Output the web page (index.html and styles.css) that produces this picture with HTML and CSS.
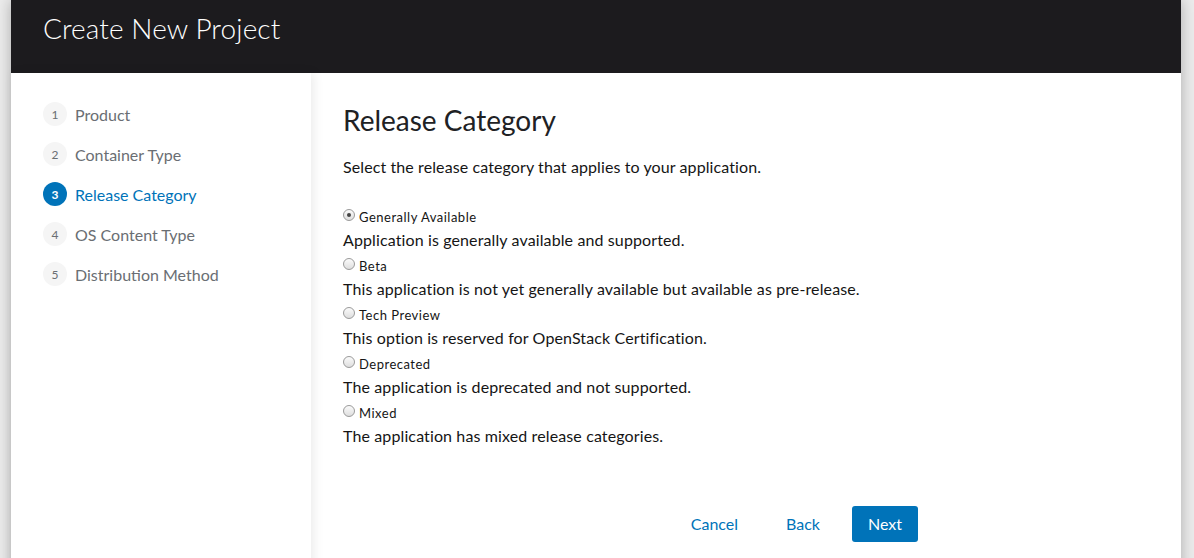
FILE: index.html
```html
<!DOCTYPE html>
<html lang="en">
<head>
<meta charset="utf-8">
<title>Create New Project</title>
<link rel="stylesheet" href="styles.css">
</head>
<body>
<div class="modal">
  <header class="modal-header">
    <h1 class="modal-title">Create New Project</h1>
  </header>
  <div class="wizard">
    <nav class="wizard-nav">
      <ol class="steps">
        <li class="step"><span class="step-num">1</span><span class="step-label">Product</span></li>
        <li class="step"><span class="step-num">2</span><span class="step-label">Container Type</span></li>
        <li class="step step-active"><span class="step-num">3</span><span class="step-label">Release Category</span></li>
        <li class="step"><span class="step-num">4</span><span class="step-label">OS Content Type</span></li>
        <li class="step"><span class="step-num">5</span><span class="step-label">Distribution Method</span></li>
      </ol>
    </nav>
    <main class="wizard-main">
      <h2 class="section-title">Release Category</h2>
      <p class="intro">Select the release category that applies to your application.</p>
      <div class="options">
        <div class="option">
          <label class="option-label"><input type="radio" name="cat" class="radio" checked> Generally Available</label>
          <p class="option-desc">Application is generally available and supported.</p>
        </div>
        <div class="option">
          <label class="option-label"><input type="radio" name="cat" class="radio"> Beta</label>
          <p class="option-desc">This application is not yet generally available but available as pre-release.</p>
        </div>
        <div class="option">
          <label class="option-label"><input type="radio" name="cat" class="radio"> Tech Preview</label>
          <p class="option-desc">This option is reserved for OpenStack Certification.</p>
        </div>
        <div class="option">
          <label class="option-label"><input type="radio" name="cat" class="radio"> Deprecated</label>
          <p class="option-desc">The application is deprecated and not supported.</p>
        </div>
        <div class="option">
          <label class="option-label"><input type="radio" name="cat" class="radio"> Mixed</label>
          <p class="option-desc">The application has mixed release categories.</p>
        </div>
      </div>
      <div class="footer">
        <button class="btn btn-link">Cancel</button>
        <button class="btn btn-link">Back</button>
        <button class="btn btn-primary">Next</button>
      </div>
    </main>
  </div>
</div>
</body>
</html>
```

FILE: styles.css
```css
* { box-sizing: border-box; }
html, body { height: 100%; }
body {
  margin: 0;
  background: #ececec;
  font-family: Lato, "Liberation Sans", sans-serif;
  color: #151515;
  overflow: hidden;
}
.modal {
  margin: 0 13px 0 11px;
  min-height: 700px;
  background: #fff;
  box-shadow: 0 0 14px rgba(0,0,0,0.28);
  display: flex;
  flex-direction: column;
}
.modal-header {
  height: 73px;
  background: #1c1b1e;
  padding: 10px 32px 0;
}
.modal-title {
  margin: 0;
  font-size: 28px;
  line-height: 36px;
  font-weight: 300;
  color: #fff;
  letter-spacing: 0.1px;
}
.wizard {
  flex: 1;
  display: grid;
  grid-template-columns: 300px 1fr;
}
.wizard-nav {
  position: relative;
  z-index: 1;
  background: #fff;
  box-shadow: 3px 0 10px rgba(0,0,0,0.08);
  padding: 29px 16px 0 32px;
}
.steps {
  list-style: none;
  margin: 0;
  padding: 0;
  display: flex;
  flex-direction: column;
  gap: 16px;
}
.step {
  display: flex;
  align-items: center;
  gap: 8px;
  height: 24px;
}
.step-num {
  width: 24px;
  height: 24px;
  border-radius: 50%;
  background: #f5f5f5;
  color: #6a6e73;
  font-size: 12px;
  display: flex;
  align-items: center;
  justify-content: center;
}
.step-label {
  font-size: 16px;
  color: #6a6e73;
}
.step-active .step-num {
  background: #0073b9;
  color: #fff;
  font-weight: 700;
}
.step-active .step-label { color: #0073b9; }
.wizard-main {
  padding: 29px 32px 0;
  background: #fff;
}
.section-title {
  margin: 0;
  font-size: 28px;
  line-height: 36px;
  font-weight: 400;
  color: #202124;
}
.intro {
  margin: 17px 0 0;
  font-size: 16px;
  line-height: 24px;
  letter-spacing: 0.1px;
}
.options {
  margin-top: 27px;
  display: flex;
  flex-direction: column;
}
.option-label {
  display: flex;
  align-items: center;
  font-size: 13px;
  line-height: 22px;
  color: #151515;
  letter-spacing: 0.5px;
}
.radio {
  appearance: none;
  -webkit-appearance: none;
  width: 12px;
  height: 12px;
  margin: 0 4px 4px 0;
  border-radius: 50%;
  border: 1px solid #9a9a9a;
  background: linear-gradient(#fbfbfb, #dedede);
  display: inline-grid;
  place-items: center;
}
.radio:checked::after {
  content: "";
  width: 4px;
  height: 4px;
  border-radius: 50%;
  background: #444;
}
.option-desc {
  margin: 0 0 3px;
  font-size: 16px;
  line-height: 24px;
  letter-spacing: 0.12px;
}
.footer {
  width: 575px;
  margin-top: 55px;
  display: flex;
  justify-content: flex-end;
  gap: 16px;
}
.btn {
  font-family: inherit;
  font-size: 16px;
  line-height: 24px;
  padding: 6px 16px;
  border: 0;
  border-radius: 3px;
  cursor: pointer;
}
.btn-link {
  background: transparent;
  color: #0073b9;
}
.btn-primary {
  background: #0073b9;
  color: #fff;
}
```
